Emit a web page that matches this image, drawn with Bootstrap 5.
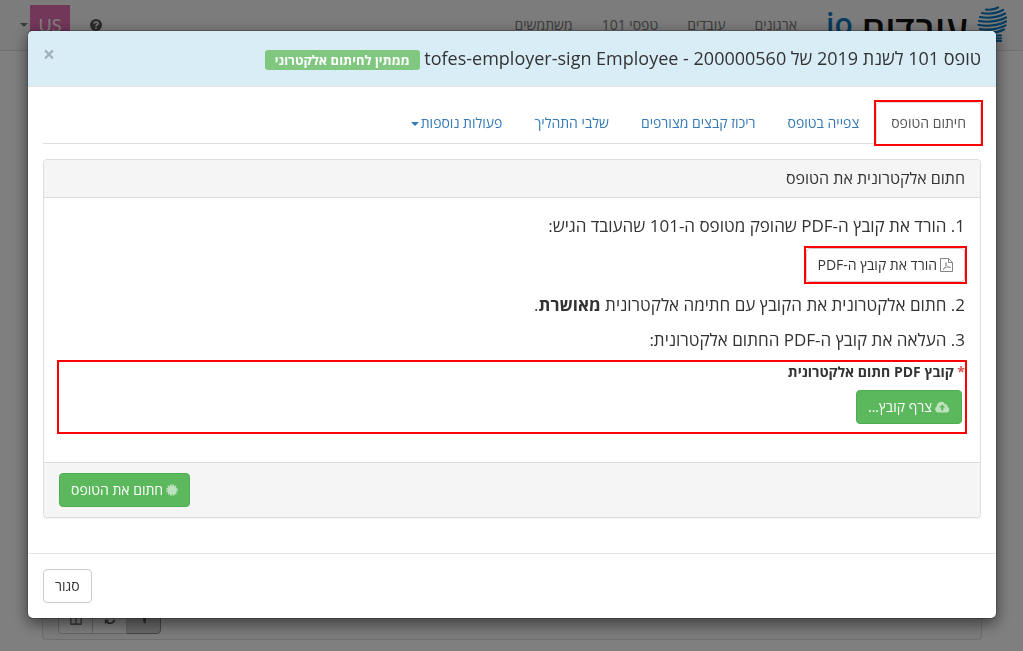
<!DOCTYPE html>
<html lang="he" dir="rtl">
<head>
<meta charset="utf-8">
<meta name="viewport" content="width=device-width, initial-scale=1">
<title>חיתום טופס 101</title>
<link href="https://cdn.jsdelivr.net/npm/bootstrap@5.3.0/dist/css/bootstrap.min.css" rel="stylesheet">
<style>
  body { font-family: "Open Sans", "Noto Sans", "DejaVu Sans", sans-serif; font-size: 14px; line-height: 20px; color: #333; background: #fff; }
  svg { fill: currentColor; }
  .line-art { fill: none; stroke: currentColor; }

  /* page behind the dialog */
  .site-bar { height: 51px; padding: 0 16px 0 20px; background: #f8f8f8; border-bottom: 1px solid #e0e0e0; }
  .site-bar a { color: #777; text-decoration: none; }
  .site-bar .brand-link { gap: 9px; color: #0a78be; }
  .globe { margin-top: 6px; }
  .brand-word { padding-top: 14px; font-size: 37px; line-height: 30px; font-weight: 600; color: #111; }
  .brand-tld { padding-top: 9px; font-size: 30px; line-height: 30px; font-weight: 600; }
  .site-nav { gap: 29px; padding: 15px 29px 0 0; }
  .site-user { gap: 20px; }
  .user-link { gap: 2px; }
  .avatar { width: 40px; height: 40px; margin: 5px 0; background: #e66eb4; color: #fff; font-family: Lato, sans-serif; font-size: 18px; line-height: 40px; }
  .page-main { padding: 20px 41px 11px 42px; }
  .back-panel { padding: 5px 15px; border: 1px solid #ddd; border-radius: 4px; background: #f8f8f8; }
  .tool-set .btn { width: 35px; height: 34px; padding: 0; color: #555; background: #fff; border-color: #ccc; border-radius: 0; }
  .tool-set .btn + .btn { margin-right: -1px; }
  .tool-set .btn:first-child { border-radius: 0 4px 4px 0; }
  .tool-set .btn:last-child { border-radius: 4px 0 0 4px; }
  .tool-set .btn.active { background: #d4d4d4; border-color: #8c8c8c; }

  /* dialog */
  .modal-dialog { max-width: none; margin: 30px 26px 30px 27px; }
  .modal-content { border: 1px solid rgba(0,0,0,.2); border-radius: 6px; box-shadow: 0 5px 15px rgba(0,0,0,.5); color: #333; }
  .modal-header { padding: 15px; background: #d9edf7; border-color: #e5e5e5; border-radius: 5px 5px 0 0; }
  .modal-title { font-size: 18px; line-height: 25px; font-weight: 400; }
  .state-tag { display: inline-block; padding: 0 10px; background: #80c780; color: #fff; border-radius: 3px; font-size: 13px; line-height: 20px; font-weight: 700; }
  .x-btn { font-size: 21px; line-height: 17px; font-weight: 700; color: #000; opacity: .25; }
  .modal-body { padding: 15px; }
  .modal-footer { padding: 15px; border-color: #e5e5e5; }
  .modal-footer > * { margin: 0; }
  .nav-tabs { padding: 0; margin-bottom: 15px; border-color: #ddd; gap: 2px; }
  .nav-tabs .nav-item { margin-bottom: -1px; }
  .nav-tabs .nav-link { margin: 0; padding: 10px 14px; border-radius: 4px 4px 0 0; color: #337ab7; }
  .nav-tabs .nav-link.active { color: #555; border-color: #ddd #ddd #fff; }
  .marked { outline: 2px solid #f00; }
  .caret { display: inline-block; border: 4px solid transparent; border-top-color: currentColor; border-bottom: 0; vertical-align: middle; }
  .nav-link .caret { margin-right: 2px; }
  .sign-panel { margin-bottom: 20px; border: 1px solid #ddd; border-radius: 4px; box-shadow: 0 1px 1px rgba(0,0,0,.05); }
  .sign-panel .card-header { padding: 10px 15px; background: #f5f5f5; border-color: #ddd; }
  .sign-panel .card-header h2 { font-size: 16px; line-height: 17px; font-weight: 400; }
  .sign-panel .card-body { padding: 15px; }
  .sign-panel .card-footer { padding: 10px 15px; background: #f5f5f5; border-color: #ddd; }
  .step, .get-file { margin: 0 0 10px; }
  .step { font-size: 17px; line-height: 25px; }
  .act { display: inline-flex; align-items: center; gap: 3px; font-size: 14px; line-height: 20px; padding: 6px 11px; border-radius: 4px; }
  .act-plain { background: #fff; border-color: #ccc; color: #333; }
  .act-go { background: #5cb85c; border-color: #4cae4c; color: #fff; }
  .act svg { opacity: .6; }
  .file-box { padding: 0 3px 8px; margin-bottom: 15px; }
  .file-box label { display: block; margin: 0 -3px 8px; font-weight: 700; line-height: 20px; }
  .need { color: #d9534f; }
</style>
</head>
<body>
<div class="d-flex flex-column min-vh-100">
  <header class="site-bar d-flex justify-content-between">
    <div class="d-flex align-items-start">
      <a href="#" class="brand-link d-flex align-items-start">
        <svg class="globe line-art" width="30" height="36" viewBox="0 0 30 36" stroke-width="2.2" stroke-linecap="round">
          <path d="M9 3.500Q16 4.500 21 1.500M5 7Q17 9 26 4M3 11Q17 13.500 28 7.500M2 15Q17 17.500 29 11.500M1.500 19Q17 21.500 29 15.500M3 23Q17 25 28.500 19.500M9 26.500Q19 27.500 27 23.500M18 29.500H24M19 32.500H24M20 35H24"/>
        </svg>
        <span class="brand-word">עובדים</span><span class="brand-tld">io</span>
      </a>
      <nav class="site-nav d-flex"><a href="#">ארגונים</a><a href="#">עובדים</a><a href="#">טפסי 101</a><a href="#">משתמשים</a></nav>
    </div>
    <div class="site-user d-flex align-items-center">
      <a href="#" aria-label="עזרה" class="d-flex"><svg width="12" height="12" viewBox="0 0 12 12"><circle cx="6" cy="6" r="6" fill="#555"/><path d="M4 4.600Q4.200 3 6 3Q8 3 8 4.600Q8 5.500 6.900 6Q6 6.400 6 7.200M6 8.200V9.800" fill="none" stroke="#f8f8f8" stroke-width="1.600"/></svg></a>
      <a href="#" class="user-link d-flex align-items-center"><span class="avatar text-center">US</span><span class="caret"></span></a>
    </div>
  </header>
  <main class="page-main flex-grow-1 d-flex">
    <section class="back-panel flex-grow-1 d-flex align-items-end justify-content-end">
      <div class="tool-set d-flex">
        <button type="button" class="btn active" aria-label="סינון"><svg width="12" height="12" viewBox="0 0 14 14"><path d="M1 1H13L9 7V13L6 10V7Z"/></svg></button>
        <button type="button" class="btn" aria-label="רענון"><svg class="line-art" width="12" height="12" viewBox="0 0 14 14" stroke-width="2"><path d="M2 6A5 5 0 0 1 11 4M12 8A5 5 0 0 1 3 10"/><path d="M13 1V6H8ZM1 13V8H6Z" fill="currentColor" stroke="none"/></svg></button>
        <button type="button" class="btn" aria-label="עמודות"><svg class="line-art" width="12" height="12" viewBox="0 0 14 14" stroke-width="1.300"><path d="M1 1.500H13V13H1ZM1 5H13M7 1.500V13"/></svg></button>
      </div>
    </section>
  </main>
</div>

<div class="modal-backdrop show"></div>
<div class="modal d-block" role="dialog" aria-modal="true" aria-labelledby="dlg-title">
  <div class="modal-dialog">
    <div class="modal-content">
      <div class="modal-header align-items-start justify-content-between">
        <h1 class="modal-title" id="dlg-title">טופס 101 לשנת 2019 של <bdi dir="ltr">tofes-employer-sign Employee - 200000560</bdi> <span class="state-tag">ממתין לחיתום אלקטרוני</span></h1>
        <button type="button" class="btn p-0 border-0 x-btn" aria-label="סגירה">×</button>
      </div>
      <div class="modal-body">
        <ul class="nav nav-tabs">
          <li class="nav-item marked"><a class="nav-link active" href="#">חיתום הטופס</a></li>
          <li class="nav-item"><a class="nav-link" href="#">צפייה בטופס</a></li>
          <li class="nav-item"><a class="nav-link" href="#">ריכוז קבצים מצורפים</a></li>
          <li class="nav-item"><a class="nav-link" href="#">שלבי התהליך</a></li>
          <li class="nav-item"><a class="nav-link" href="#">פעולות נוספות<span class="caret"></span></a></li>
        </ul>
        <section class="card sign-panel">
          <div class="card-header"><h2 class="m-0">חתום אלקטרונית את הטופס</h2></div>
          <div class="card-body">
            <p class="step">1. הורד את קובץ ה-PDF שהופק מטופס ה-101 שהעובד הגיש:</p>
            <div class="get-file d-flex">
              <div class="d-flex marked">
                <button type="button" class="btn act act-plain"><svg class="line-art" width="13" height="14" viewBox="0 0 13 14" stroke-width="1"><path d="M.5.5H8.500L12.500 4.500V13.500H.5ZM8.500.5V4.500H12.500"/><path d="M3 11.500C5 10.500 6.500 6.500 6 4.500C5.500 6.500 7.500 9.500 10.500 9.500C8 8.500 5 9.500 3 11.500Z" stroke-width=".8"/></svg>הורד את קובץ ה-PDF</button>
              </div>
            </div>
            <p class="step">2. חתום אלקטרונית את הקובץ עם חתימה אלקטרונית <b>מאושרת</b>.</p>
            <p class="step">3. העלאה את קובץ ה-PDF החתום אלקטרונית:</p>
            <div class="file-box marked">
              <label for="attach"><span class="need">*</span> קובץ PDF חתום אלקטרונית</label>
              <button type="button" id="attach" class="btn act act-go"><svg width="15" height="12" viewBox="0 0 15 12"><path fill-rule="evenodd" d="M3.500 11.500A3.400 3.400 0 0 1 2 5.100A4.200 4.200 0 0 1 10 3.200A2.200 2.200 0 0 1 12.500 6A2.900 2.900 0 0 1 12 11.500ZM7.200 3.500L4.200 6.600H6.200V9.500H8.300V6.600H10.200Z"/></svg>צרף קובץ...</button>
            </div>
          </div>
          <div class="card-footer d-flex justify-content-end">
            <button type="button" class="btn act act-go"><svg width="12" height="12" viewBox="-6.500 -6.500 13 13"><circle r="5"/><circle r="5.500" fill="none" stroke="currentColor" stroke-width="1.600" stroke-dasharray="1.700 1.180"/></svg>חתום את הטופס</button>
          </div>
        </section>
      </div>
      <div class="modal-footer justify-content-end">
        <button type="button" class="btn act act-plain">סגור</button>
      </div>
    </div>
  </div>
</div>
<script src="https://cdn.jsdelivr.net/npm/bootstrap@5.3.0/dist/js/bootstrap.bundle.min.js"></script>
</body>
</html>
